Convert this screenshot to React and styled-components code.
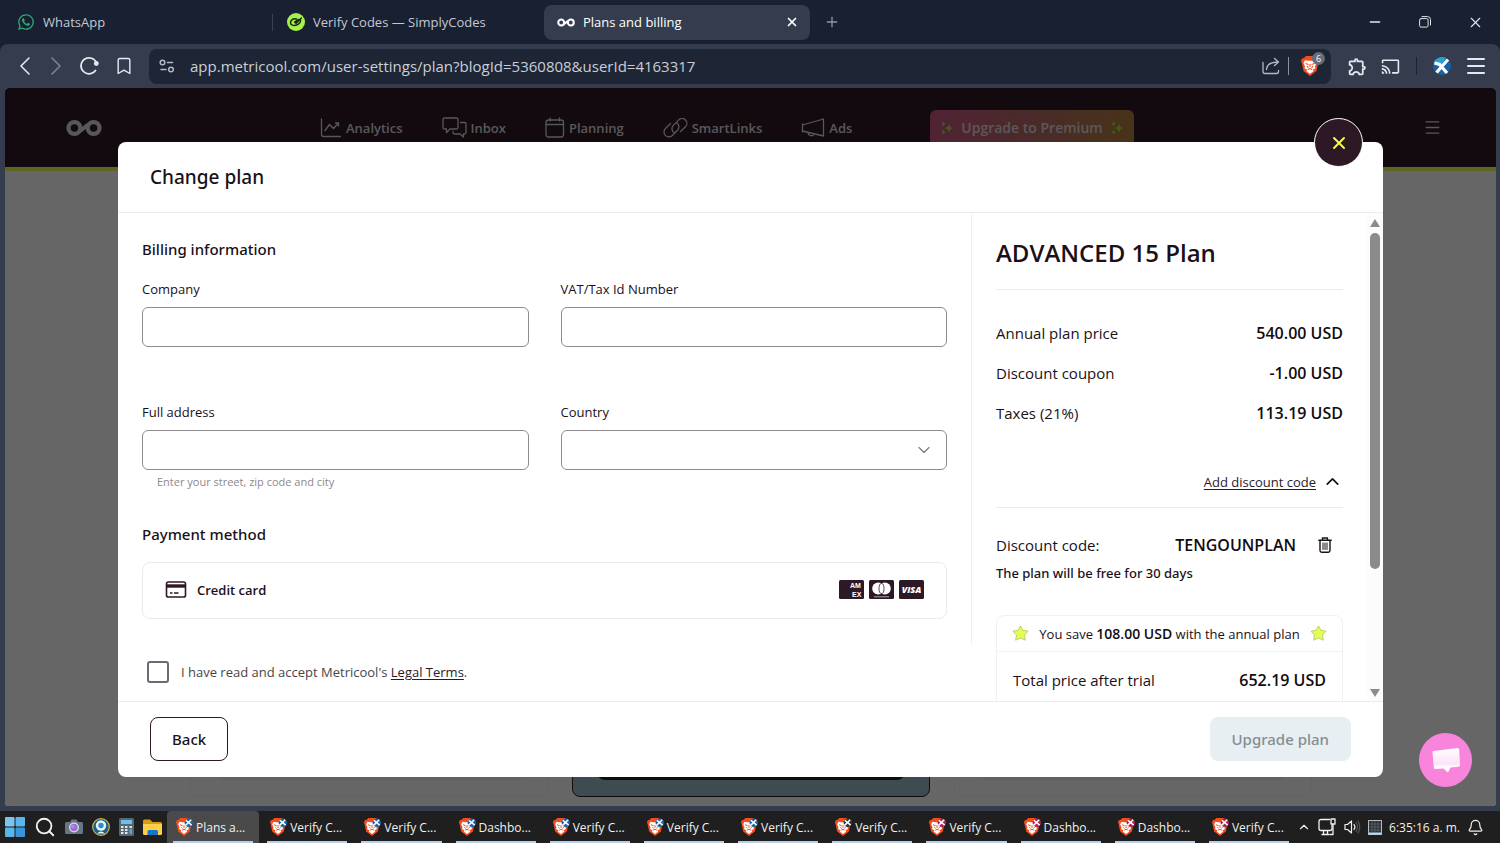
import { useState } from 'react';
import styled, { createGlobalStyle, css } from 'styled-components';
import { FaWhatsapp } from 'react-icons/fa';
import { MdCast, MdOutlineExtension } from 'react-icons/md';
import {
    Bell, Bookmark, ChevronDown, ChevronUp, Menu, Minus, Plus, Search, X,
} from 'lucide-react';

const GlobalStyle = createGlobalStyle`
    * {
        box-sizing: border-box;
    }

    body {
        margin: 0;
        background: #1f1f1f;
        font-family: "Open Sans", "Noto Sans", sans-serif;
    }

    button, input, select {
        font: inherit;
    }

    button {
        padding: 0;
        border: 0;
        background: none;
        color: inherit;
        cursor: pointer;
    }

    svg {
        display: block;
        flex: none;
    }
`;

const medium = css`
    font-family: "Noto Sans", "Open Sans", sans-serif;
    font-weight: 500;
`;

const Desktop = styled.div`
    display: flex;
    flex-direction: column;
    min-height: 100vh;
    overflow: hidden;
`;

/* ---------- browser ---------- */

const Browser = styled.div`
    flex: 1;
    display: flex;
    flex-direction: column;
    background: #182031;
`;

const TabStrip = styled.div`
    display: flex;
    align-items: center;
    height: 44px;
    padding-left: 4px;
    gap: 4px;
    font-size: 13px;
    color: #c3c9d4;
`;

const Tab = styled.div`
    position: relative;
    display: flex;
    align-items: center;
    gap: 8px;
    flex: 0 1 266px;
    height: 35px;
    padding: 0 11px 0 13px;
    border-radius: 8px;
    white-space: nowrap;

    ${({ $active }) => $active && css`
        background: #343c4e;
        color: #fff;
    `}

    ${({ $divider }) => $divider && css`
        &::after {
            content: "";
            position: absolute;
            right: -3px;
            top: 9px;
            width: 1px;
            height: 17px;
            background: #3a4252;
        }
    `}
`;

const TabTitle = styled.span`
    flex: 1;
`;

const NewTab = styled.button`
    padding: 0 10px;
    color: #8d939f;
`;

const WindowControls = styled.div`
    display: flex;
    align-items: center;
    gap: 36px;
    margin-left: auto;
    padding-right: 16px;
    color: #e3e6ec;
`;

const Toolbar = styled.div`
    display: flex;
    align-items: center;
    height: 44px;
    padding: 0 12px 0 17px;
    background: #343c4e;
    border-radius: 8px 8px 0 0;
    color: #e6e9ef;
`;

const NavButtons = styled.div`
    display: flex;
    align-items: center;
    gap: 15px;
    margin-right: 15px;
`;

const NavButton = styled.button`
    color: ${({ disabled }) => (disabled ? '#7c8493' : '#e6e9ef')};
`;

const AddressBar = styled.div`
    flex: 1;
    display: flex;
    align-items: center;
    height: 35px;
    padding: 0 11px 0 10px;
    background: #1e2635;
    border-radius: 8px;
    color: #b3b8c2;
`;

const Address = styled.input`
    flex: 1;
    margin-left: 15px;
    padding: 0;
    border: 0;
    outline: 0;
    background: none;
    color: #c9ced8;
    font-size: 15px;
`;

const Divider = styled.span`
    width: 1px;
    height: 18px;
    margin: 0 11px 0 8px;
    background: #8a909c;
`;

const ToolbarDivider = styled(Divider)`
    margin: 0 0 0 16px;
    background: #1c2433;
`;

const Shield = styled.span`
    position: relative;
`;

const ShieldCount = styled.span`
    position: absolute;
    top: -4px;
    left: 12px;
    width: 13px;
    height: 13px;
    border-radius: 50%;
    background: #666c79;
    color: #fff;
    font-size: 9px;
    line-height: 13px;
    text-align: center;
`;

const Extensions = styled.div`
    display: flex;
    align-items: center;
    gap: 13px;
    margin-left: 16px;
`;

/* ---------- page behind the dialog ---------- */

const Viewport = styled.div`
    flex: 1;
    display: flex;
    padding: 0 4px 5px 5px;
    background: #343c4e;
`;

const Page = styled.div`
    position: relative;
    flex: 1;
    display: flex;
    flex-direction: column;
    overflow: hidden;
    border-radius: 4px;
    background: #fff;
`;

const SiteHeader = styled.header`
    display: flex;
    align-items: center;
    height: 83px;
    padding: 0 54px 0 61px;
    background: #2d1926;
    border-bottom: 4px solid #ecff4f;
    color: #dedbdd;
`;

const SiteNav = styled.nav`
    display: flex;
    align-items: center;
    gap: 39px;
    margin: 0 auto 0 218px;
`;

const NavLink = styled.a`
    display: flex;
    align-items: center;
    gap: 4px;
    color: inherit;
    font-size: 13px;
    font-weight: 600;
    text-decoration: none;
`;

const Premium = styled.button`
    display: flex;
    align-items: center;
    gap: 7px;
    height: 36px;
    margin-left: 39px;
    padding: 0 10px;
    border-radius: 6px;
    background: linear-gradient(90deg, #c85781, #b86b68 50%, #b48040);
    color: #e5d9de;
    font-size: 14px;
    font-weight: 600;
`;

const PlanCards = styled.div`
    flex: 1;
    display: grid;
    grid-template-columns: 358px 358px 358px;
    justify-content: center;
    gap: 24px;
    padding-bottom: 9px;
`;

const PlanCard = styled.div`
    display: flex;
    align-items: flex-end;
    padding: 0 24px 16px;
    border: 1px solid ${({ $current }) => ($current ? '#2d1926' : '#f5f5f5')};
    border-radius: 8px;
    background: ${({ $current }) => ($current ? '#98bdcb' : '#fff')};
`;

const PlanAction = styled.span`
    flex: 1;
    height: 40px;
    border-radius: 8px;
    background: ${({ $current }) => ($current ? '#2d1926' : '#f3f3f3')};
`;

const ChatButton = styled.button`
    position: absolute;
    right: 24px;
    bottom: 19px;
    display: grid;
    place-items: center;
    width: 53px;
    height: 54px;
    border-radius: 50%;
    background: #f884dc;
`;

/* ---------- dialog ---------- */

const Overlay = styled.div`
    position: absolute;
    inset: 0;
    display: flex;
    padding: 54px 113px 29px;
    background: rgba(0, 0, 0, 0.6);
`;

const Dialog = styled.div`
    position: relative;
    flex: 1;
    display: flex;
    flex-direction: column;
    min-width: 0;
    border-radius: 8px;
    background: #fff;
    color: #1a1118;
`;

const CloseButton = styled.button`
    position: absolute;
    top: -24px;
    right: 20px;
    display: grid;
    place-items: center;
    width: 49px;
    height: 49px;
    border: 1px solid #fff;
    border-radius: 50%;
    background: #2d1926;
    color: #ecff4f;
`;

const DialogHeader = styled.div`
    display: flex;
    align-items: center;
    height: 71px;
    padding: 0 32px;
    border-bottom: 1px solid #e9edf0;
`;

const DialogTitle = styled.h2`
    ${medium}
    margin: 0;
    font-size: 19px;
`;

const DialogBody = styled.div`
    flex: 1 1 0;
    display: grid;
    grid-template-columns: minmax(0, 1fr) 411px;
    min-height: 0;
    overflow: hidden;
`;

const DialogFooter = styled.div`
    display: flex;
    align-items: center;
    justify-content: space-between;
    height: 76px;
    padding: 0 32px 1px;
    border-top: 1px solid #e9edf0;
`;

const FooterButton = styled.button`
    ${medium}
    height: 44px;
    padding: 0 21px;
    border: 1px solid #2d1926;
    border-radius: 8px;
    font-size: 15px;

    &:disabled {
        border-color: #e7eff2;
        background: #e7eff2;
        color: #858d91;
    }
`;

const BillingForm = styled.form`
    padding: 24px 24px 25px;
    border-right: 1px solid #edf0f2;
`;

const SectionTitle = styled.h3`
    ${medium}
    margin: 0 0 16px;
    font-size: 15px;
    line-height: 24px;
`;

const Fields = styled.div`
    display: grid;
    grid-template-columns: 1fr 1fr;
    gap: 29px 32px;
    margin-bottom: 28px;
`;

const Field = styled.div`
    display: flex;
    flex-direction: column;
    min-height: 94px;
    font-size: 13px;
    line-height: 24px;
`;

const Label = styled.label`
    margin-bottom: 6px;
`;

const control = css`
    width: 100%;
    height: 40px;
    padding: 0 12px;
    border: 1px solid #8f8b8e;
    border-radius: 6px;
    background: #fff;
    color: inherit;
`;

const Input = styled.input`
    ${control}
`;

const SelectWrap = styled.div`
    position: relative;

    svg {
        position: absolute;
        right: 13px;
        top: 10px;
        color: #77727a;
        pointer-events: none;
    }
`;

const Select = styled.select`
    ${control}
    appearance: none;
`;

const Hint = styled.small`
    padding-left: 15px;
    color: #8d898c;
    font-size: 11px;
`;

const PaymentOption = styled.div`
    display: flex;
    align-items: center;
    gap: 10px;
    height: 57px;
    padding: 0 22px 2px 22px;
    border: 1px solid #e6ebef;
    border-radius: 8px;
    font-size: 13px;
    font-weight: 600;
`;

const CardBrands = styled.div`
    display: flex;
    gap: 5px;
    margin-left: auto;
`;

const Terms = styled.div`
    display: flex;
    align-items: center;
    gap: 12px;
    height: 56px;
    padding-left: 29px;
    color: #4a444a;
    font-size: 13px;
`;

const Checkbox = styled.input`
    appearance: none;
    width: 22px;
    height: 22px;
    margin: 0;
    border: 2px solid #6a6b73;
    border-radius: 3px;
    background: #fff;

    &:checked {
        background: #2d1926;
    }
`;

const TextLink = styled.a`
    color: #2d1926;
    text-underline-offset: 2px;
`;

const SummaryPane = styled.aside`
    display: flex;
    min-height: 0;
    overflow: hidden;
`;

const Summary = styled.div`
    flex: 1;
    padding: 24px;
`;

const PlanName = styled.h2`
    margin: 0 0 23px;
    padding-bottom: 20px;
    border-bottom: 1px solid #e9edf0;
    font-size: 24px;
    font-weight: 600;
    line-height: 32px;
`;

const Row = styled.div`
    display: flex;
    align-items: center;
    justify-content: space-between;
    height: 40px;
    font-size: 15px;
`;

const Amount = styled.strong`
    color: #120b10;
    font-size: ${({ $small }) => ($small ? '14px' : '16px')};
    font-weight: 600;
`;

const DiscountToggle = styled.div`
    display: flex;
    align-items: center;
    justify-content: flex-end;
    gap: 6px;
    height: 52px;
    margin: 23px 0 17px;
    border-bottom: 1px solid #e3edf2;
    font-size: 13px;
`;

const Code = styled(Amount)`
    margin-left: auto;
    margin-right: 22px;
`;

const TrashButton = styled.button`
    margin-right: 11px;
`;

const FreeNote = styled.p`
    ${medium}
    margin: 0 0 34px;
    font-size: 13px;
    line-height: 16px;
`;

const TotalBox = styled.div`
    border: 1px solid #edf2f4;
    border-radius: 8px;
`;

const Saving = styled.div`
    display: flex;
    align-items: center;
    justify-content: space-between;
    height: 36px;
    padding: 0 15px;
    border-bottom: 1px solid #edf2f4;
    font-size: 13px;
`;

const Total = styled(Row)`
    height: 56px;
    padding: 0 16px;
`;

const Scrollbar = styled.div`
    display: flex;
    flex-direction: column;
    align-items: center;
    flex: 0 0 16px;
    padding: 6px 0 4px;
    background: #fcfcfc;
`;

const ScrollThumb = styled.div`
    flex: 0 1 336px;
    width: 10px;
    margin: 6px 0 auto;
    border-radius: 5px;
    background: #8b8b8b;
`;

const ScrollArrow = styled.div`
    border: solid transparent;
    border-width: 0 5px 8px;
    border-bottom-color: #8b8b8b;
    ${({ $down }) => $down && 'transform: rotate(180deg);'}
`;

/* ---------- taskbar ---------- */

const Taskbar = styled.footer`
    display: flex;
    align-items: center;
    height: 32px;
    padding: 0 16px 0 5px;
    background: #1f1f1f;
    color: #f1f1f1;
    font-size: 12px;
`;

const Pinned = styled.div`
    display: flex;
    align-items: center;
    gap: 9px;
    margin-right: 5px;
`;

const Tasks = styled.div`
    flex: 0 1 1128px;
    display: flex;
    gap: 2px;
    min-width: 0;
`;

const Task = styled.button`
    position: relative;
    flex: 1;
    display: flex;
    align-items: center;
    gap: 3px;
    height: 32px;
    padding-left: 8px;
    border-radius: 4px 4px 0 0;
    background: ${({ $active }) => ($active ? '#4a4a4a' : 'none')};
    white-space: nowrap;

    &::after {
        content: "";
        position: absolute;
        left: 6px;
        right: 6px;
        bottom: 0;
        height: 2px;
        background: #b8cfe6;
    }
`;

const Tray = styled.div`
    display: flex;
    align-items: center;
    gap: 7px;
    margin-left: auto;
    white-space: nowrap;
`;

/* ---------- drawings ---------- */

const Infinity = ({ width = 36, height = 18 }) => (
    <svg width={width} height={height} viewBox="0 0 36 18" fill="none" stroke="currentColor">
        <circle cx="8.4" cy="9" r="5.9" strokeWidth="4.2" />
        <circle cx="27.6" cy="9" r="5.9" strokeWidth="4.2" />
        <path d="M13 12.500 C16 12 19 6.500 23 5.500" strokeWidth="4" />
    </svg>
);

const BraveLion = ({ size = 20, badge }) => (
    <svg width={size} height={size} viewBox="0 0 20 20">
        <path d="M6 0h8l2 2 2 .5 1 2.500-.8 2L16.500 15 10 20l-6.500-5L1.800 7 1 5l1-2.500L4 2z" fill="#f24d1d" />
        <path
            d="M5 4.200 8 4.800h4l3-.6L16.500 7 15 10.200l.5 2-2.800 1.600 1 1.200-3.700 2.800L6.300 15l1-1.200-2.800-1.600.5-2L3.500 7z"
            fill="#fff"
        />
        <path
            d="m5.500 7.500 3 1M14.500 7.500l-3 1M10 8v3M7 10.300l1.500 1.200M13 10.300l-1.500 1.200M8 13.500l2-1 2 1"
            stroke="#f24d1d"
            strokeWidth="1.100"
            fill="none"
        />
        {badge && (
            <>
                <circle cx="15.300" cy="5.200" r="4.700" fill={badge} />
                <path d="m12 2.500 6.500 5.500M18 2l-6.500 6.500" stroke="#fff" strokeWidth="1.700" />
            </>
        )}
    </svg>
);

const line = { fill: 'none', stroke: 'currentColor', strokeLinecap: 'round', strokeLinejoin: 'round' };

const ChartIcon = () => (
    <svg width="22" height="20" viewBox="0 0 22 20" {...line} strokeWidth="1.300">
        <path d="M1.500 1v15.500q0 2 2 2H20.500M5 12.500l4.500-6 4 4 5-5.500M15.500 5h3v3" />
    </svg>
);

const InboxIcon = () => (
    <svg width="25" height="21" viewBox="0 0 25 21" {...line} strokeWidth="1.300">
        <path d="M2.500 1h12q1.500 0 1.500 1.500v8q0 1.500-1.500 1.500H8l-3.500 3.500V12h-2Q1 12 1 10.500v-8Q1 1 2.500 1z" />
        <path d="M18.500 5.500h4Q24 5.500 24 7v8.500q0 1.500-1.500 1.500h-1v3L18 17h-5.500q-1.500 0-1.500-1.500V14.500" />
    </svg>
);

const CalendarIcon = () => (
    <svg width="20" height="21" viewBox="0 0 20 21" {...line} strokeWidth="1.300">
        <rect x="1" y="3" width="17.500" height="17" rx="2.500" />
        <path d="M1 7.500h17.500M5 .8V4M14.500 .8V4" />
    </svg>
);

const LinkIcon = () => (
    <svg width="25" height="20" viewBox="0 0 25 20" {...line} strokeWidth="1.300">
        <path d="m7.500 5.500-5 5a4.800 4.800 0 0 0 6.800 7l5.500-5.500a4.800 4.800 0 0 0-1.300-7.300" />
        <path d="m17.500 13.500 5-4.800a4.700 4.700 0 0 0-6.700-6.800l-5.500 5.500a4.800 4.800 0 0 0 1.300 7.600" />
    </svg>
);

const AdsIcon = () => (
    <svg width="24" height="20" viewBox="0 0 24 20" {...line} strokeWidth="1.300">
        <path d="M22.500 1v17L1.500 13V7zM1.500 6v8M7 14.500a3.500 3.500 0 0 0 6.500 1.500" />
    </svg>
);

const Sparkles = () => (
    <svg width="14" height="14" viewBox="0 0 14 14" fill="#a5e03c">
        <path d="m9 3 1.500 3L13.500 7l-3 1.300L9 11.500 7.500 8.300 4.500 7l3-1z" />
        <path d="m3.500 0 .8 2 2 .8-2 .8-.8 2-.8-2-2-.8 2-.8zM3.500 8.500l.8 2 2 .8-2 .8-.8 1.900-.8-1.900-2-.8 2-.8z" />
    </svg>
);

const Star = () => (
    <svg width="17" height="17" viewBox="0 0 17 17">
        <path
            d="m8.500 1 2.400 4.300 5.100.9-3.500 3.800.8 5.200-4.800-2.200L3.700 15.200l.8-5.200L1 6.200l5.100-.9z"
            fill="#e4ff4f"
            stroke="#b9d070"
            strokeLinejoin="round"
        />
    </svg>
);

const CreditCardIcon = () => (
    <svg width="22" height="17" viewBox="0 0 22 17" fill="none" stroke="#2d1926" strokeWidth="1.600">
        <rect x="1.500" y="1" width="19" height="15" rx="1.800" />
        <path d="M1.500 5h19" strokeWidth="3.400" />
        <path d="M5 12h2.500M9 12h4.500" />
    </svg>
);

const TrashIcon = () => (
    <svg width="14" height="16" viewBox="0 0 14 16" {...line} strokeWidth="1.400">
        <path d="M.8 3.300h12.400M4.500 3V1h5v2M2 3.500V13.500q0 1.700 1.700 1.700h6.600q1.700 0 1.700-1.700V3.500" />
        <path d="M5 6v6.500M7 6v6.500M9 6v6.500" strokeWidth="1" />
    </svg>
);

const Brand = ({ name }) => (
    <svg width="25" height="19" viewBox="0 0 25 19" role="img" aria-label={name}>
        <rect width="25" height="19" rx="1.500" fill="#2d1926" />
        {name === 'Visa' && (
            <text x="12.500" y="13" fill="#fff" fontSize="9" fontWeight="800" fontStyle="italic" textAnchor="middle">VISA</text>
        )}
        {name === 'Mastercard' && (
            <>
                <circle cx="9.200" cy="8.500" r="6" fill="#fff" />
                <circle cx="15.800" cy="8.500" r="6" fill="#fff" />
                <ellipse cx="12.500" cy="8.500" rx="2.500" ry="5" fill="#fff" stroke="#2d1926" strokeWidth=".8" />
                <path d="M5 16.800h15" stroke="#aaa2a8" />
            </>
        )}
        {name === 'Amex' && (
            <g fill="#fff" fontFamily="Liberation Sans, sans-serif" fontSize="7" fontWeight="700">
                <text x="11" y="8">AM</text>
                <text x="13" y="17">EX</text>
            </g>
        )}
    </svg>
);

const SimplyIcon = () => (
    <svg width="18" height="18" viewBox="0 0 18 18">
        <circle cx="9" cy="9" r="9" fill="#a6f24c" />
        <g fill="none" stroke="#16240f" strokeWidth="1.500" strokeLinecap="round">
            <path d="M9.500 6C6 5 3.500 7.500 3.500 9.800s3 3.200 6 2.200c2.500-1 4-2.500 4-4.500" />
            <path d="m7.500 9 1.500 1.300L14.500 5M8.500 8.500l3.500-2" />
        </g>
    </svg>
);

const SiteInfoIcon = () => (
    <svg width="16" height="14" viewBox="0 0 16 14" {...line} strokeWidth="1.500">
        <circle cx="3.500" cy="3.500" r="2.300" />
        <circle cx="12" cy="10.500" r="2.300" />
        <path d="M8.500 3.500h5M2 10.500h5" />
    </svg>
);

const ReloadIcon = () => (
    <svg width="20" height="20" viewBox="0 0 20 20" {...line} strokeWidth="1.700">
        <path d="M16.500 14.500A8 8 0 1 1 17.500 7" />
        <circle cx="17.300" cy="7.500" r="1.600" fill="currentColor" />
    </svg>
);

const ShareIcon = () => (
    <svg width="18" height="18" viewBox="0 0 18 18" {...line} strokeWidth="1.300">
        <path d="M1 5.500v9q0 2 2 2h11.500q2 0 2-2V13.500M4.500 12.500C5 7.500 9 5 16 5M12.500 1.500 16.500 5l-4 3.500" />
    </svg>
);

const Arrow = ({ right }) => (
    <svg width="16" height="18" viewBox="0 0 16 18" {...line} strokeWidth="1.600">
        <path d={right ? 'm4 1 8 8-8 8' : 'M12 1 4 9l8 8'} />
    </svg>
);

const RestoreIcon = () => (
    <svg width="12" height="12" viewBox="0 0 12 12" {...line}>
        <rect x=".6" y="2.600" width="8.500" height="8.500" rx="1.500" />
        <path d="M3 .6h5.500q3 0 3 3V9" />
    </svg>
);

const ProfileIcon = () => (
    <svg width="18" height="18" viewBox="0 0 18 18">
        <circle cx="9" cy="9" r="9" fill="#1760a8" />
        <path d="M.5 6A9 9 0 0 1 13 1L8 8z" fill="#29a3d6" />
        <path d="m1.500 6 5 1.500 7.500 8.500M15 2.500 3.500 15.500" stroke="#fff" strokeWidth="3.200" fill="none" />
    </svg>
);

const ChatIcon = () => (
    <svg width="30" height="28" viewBox="0 0 30 28">
        <defs>
            <linearGradient id="chat" x2="0" y2="1">
                <stop offset="0" stopColor="#fff" />
                <stop offset=".65" stopColor="#fae3f6" />
                <stop offset=".8" stopColor="#fff" />
            </linearGradient>
        </defs>
        <path d="M2.500 5 26.500 2q1.500 0 1.700 1.500L29 19q0 1.500-1.500 1.700l-8 .8-2.500 5-4.500-4-8 .5Q3 23 2.800 21.500L1.500 6.500Q1.300 5 2.500 5z" fill="url(#chat)" />
    </svg>
);

const WindowsIcon = () => (
    <svg width="20" height="20" viewBox="0 0 20 20">
        <g fill="#58b6ec">
            <rect width="9.500" height="9.500" rx="1" fill="#7cc4ee" />
            <rect x="10.500" width="9.500" height="9.500" rx="1" />
            <rect y="10.500" width="9.500" height="9.500" rx="1" />
            <rect x="10.500" y="10.500" width="9.500" height="9.500" rx="1" fill="#3b94da" />
        </g>
    </svg>
);

const CameraApp = () => (
    <svg width="18" height="16" viewBox="0 0 18 16">
        <path d="M5 3 6.500.5h5L13 3h3.500Q18 3 18 4.500v9q0 1.500-1.500 1.500h-15Q0 15 0 13.500v-9Q0 3 1.500 3z" fill="#697582" />
        <circle cx="9" cy="8.500" r="5" fill="#d9dfec" />
        <circle cx="9" cy="8.500" r="3.700" fill="#a66ad6" />
        <circle cx="8" cy="7.500" r="1.700" fill="#7fa4f2" />
    </svg>
);

const WebcamApp = () => (
    <svg width="18" height="18" viewBox="0 0 18 18">
        <circle cx="9" cy="9" r="8.300" fill="#15608e" stroke="#d8b34f" strokeWidth="1.200" />
        <circle cx="9" cy="7.500" r="5.200" fill="#e8f4fa" />
        <circle cx="9" cy="7.500" r="2.700" fill="#2a8ec0" />
        <path d="M5 15.500q4-4 8 0z" fill="#e8f4fa" />
    </svg>
);

const CalculatorApp = () => (
    <svg width="15" height="18" viewBox="0 0 15 18">
        <rect width="15" height="18" rx="1.500" fill="#5a6673" />
        <rect x="2" y="2" width="11" height="4" fill="#63c5e8" />
        <path d="M2 9h2.500M6 9h2.500M10.500 9H13M2 12h2.500M6 12h2.500M2 15h2.500M6 15h2.500" stroke="#dfe5ea" strokeWidth="2" />
        <path d="M10.500 13.500H13" stroke="#45aee0" strokeWidth="5" />
    </svg>
);

const FolderApp = () => (
    <svg width="19" height="17" viewBox="0 0 19 17">
        <path d="M0 2Q0 .5 1.500.5H7L9.500 3h8Q19 3 19 4.500V8H0z" fill="#d99a1c" />
        <path d="M0 6q0-1 1-1h17q1 0 1 1v8.500q0 1.500-1.500 1.500h-16Q0 16 0 14.500z" fill="#fcd04c" />
        <path d="M4.500 16v-3.500q0-1.500 1.500-1.500h7.500q1.500 0 1.500 1.500V16z" fill="#1677c9" />
    </svg>
);

const MonitorIcon = () => (
    <svg width="19" height="18" viewBox="0 0 19 18" {...line} strokeWidth="1.300">
        <path d="M11.500 1.500H3q-2 0-2 2v7q0 2 2 2h9q2 0 2-2V7M5.500 12.500V16M9.500 12.500V16M4 16.500h7" />
        <path d="M13 1h4v5h-4zM15 6v10.500h-3" />
    </svg>
);

const SpeakerIcon = () => (
    <svg width="17" height="14" viewBox="0 0 17 14" {...line} strokeWidth="1.200">
        <path d="M1 4.500h2.500L7.500 1v12L3.500 9.500H1zM10 4.500q1.800 2.500 0 5" />
        <path d="M12 2.500q3 4.500 0 9M14 1q3.500 6 0 12" stroke="#555" />
    </svg>
);

const MemoryIcon = () => (
    <svg width="14" height="15" viewBox="0 0 14 15">
        <rect x=".5" y=".5" width="13" height="14" fill="#2b3036" stroke="#b5bbc2" />
        <path d="M4 1v11M7 1v11M10 1v11M1 4h12M1 7h12M1 10h12" stroke="#69727c" strokeWidth=".6" />
        <path d="M1 13.500h12" stroke="#b7dcf5" strokeWidth="2" />
    </svg>
);

/* ---------- data ---------- */

const navItems = [
    { label: 'Analytics', icon: <ChartIcon /> },
    { label: 'Inbox', icon: <InboxIcon /> },
    { label: 'Planning', icon: <CalendarIcon /> },
    { label: 'SmartLinks', icon: <LinkIcon /> },
    { label: 'Ads', icon: <AdsIcon /> },
];

const prices = [
    ['Annual plan price', '540.00 USD'],
    ['Discount coupon', '-1.00 USD'],
    ['Taxes (21%)', '113.19 USD'],
];

const BLUE = '#1c65a8';
const GREY = '#34383d';
const PINK = '#a82754';

const tasks = [
    ['Plans a...', BLUE],
    ['Verify C...', BLUE],
    ['Verify C...', BLUE],
    ['Dashbo...', BLUE],
    ['Verify C...', BLUE],
    ['Verify C...', BLUE],
    ['Verify C...', BLUE],
    ['Verify C...', GREY],
    ['Verify C...', PINK],
    ['Dashbo...', PINK],
    ['Dashbo...', PINK],
    ['Verify C...', PINK],
];

function BrowserChrome() {
    return (
        <>
            <TabStrip>
                <Tab $divider>
                    <FaWhatsapp size={18} color="#2faa72" />
                    <TabTitle>WhatsApp</TabTitle>
                </Tab>
                <Tab>
                    <SimplyIcon />
                    <TabTitle>Verify Codes — SimplyCodes</TabTitle>
                </Tab>
                <Tab $active>
                    <Infinity width={18} height={9} />
                    <TabTitle>Plans and billing</TabTitle>
                    <button aria-label="Close tab"><X size={14} strokeWidth={3} /></button>
                </Tab>
                <NewTab aria-label="New tab"><Plus size={16} strokeWidth={2} /></NewTab>
                <WindowControls>
                    <button aria-label="Minimize"><Minus size={16} strokeWidth={2} /></button>
                    <button aria-label="Restore"><RestoreIcon /></button>
                    <button aria-label="Close"><X size={17} strokeWidth={1.5} /></button>
                </WindowControls>
            </TabStrip>
            <Toolbar>
                <NavButtons>
                    <NavButton aria-label="Back"><Arrow /></NavButton>
                    <NavButton aria-label="Forward" disabled><Arrow right /></NavButton>
                    <NavButton aria-label="Reload"><ReloadIcon /></NavButton>
                    <NavButton aria-label="Bookmark"><Bookmark size={20} strokeWidth={1.7} /></NavButton>
                </NavButtons>
                <AddressBar>
                    <SiteInfoIcon />
                    <Address
                        aria-label="Address"
                        defaultValue="app.metricool.com/user-settings/plan?blogId=5360808&userId=4163317"
                    />
                    <ShareIcon />
                    <Divider />
                    <Shield>
                        <BraveLion size={20} />
                        <ShieldCount>6</ShieldCount>
                    </Shield>
                </AddressBar>
                <Extensions>
                    <MdOutlineExtension size={21} />
                    <MdCast size={19} />
                </Extensions>
                <ToolbarDivider />
                <Extensions>
                    <ProfileIcon />
                    <Menu size={24} strokeWidth={2} />
                </Extensions>
            </Toolbar>
        </>
    );
}

function ChangePlan({ onClose }) {
    const [accepted, setAccepted] = useState(false);

    return (
        <Dialog role="dialog" aria-label="Change plan">
            <CloseButton aria-label="Close" onClick={onClose}>
                <X size={20} strokeWidth={2.4} />
            </CloseButton>
            <DialogHeader>
                <DialogTitle>Change plan</DialogTitle>
            </DialogHeader>
            <DialogBody>
                <div>
                    <BillingForm>
                        <SectionTitle>Billing information</SectionTitle>
                        <Fields>
                            <Field>
                                <Label htmlFor="company">Company</Label>
                                <Input id="company" />
                            </Field>
                            <Field>
                                <Label htmlFor="vat">VAT/Tax Id Number</Label>
                                <Input id="vat" />
                            </Field>
                            <Field>
                                <Label htmlFor="address">Full address</Label>
                                <Input id="address" />
                                <Hint>Enter your street, zip code and city</Hint>
                            </Field>
                            <Field>
                                <Label htmlFor="country">Country</Label>
                                <SelectWrap>
                                    <Select id="country" defaultValue="">
                                        <option value="" />
                                    </Select>
                                    <ChevronDown size={20} strokeWidth={1.3} />
                                </SelectWrap>
                            </Field>
                        </Fields>
                        <SectionTitle>Payment method</SectionTitle>
                        <PaymentOption>
                            <CreditCardIcon />
                            Credit card
                            <CardBrands>
                                <Brand name="Amex" />
                                <Brand name="Mastercard" />
                                <Brand name="Visa" />
                            </CardBrands>
                        </PaymentOption>
                    </BillingForm>
                    <Terms>
                        <Checkbox
                            id="terms"
                            type="checkbox"
                            checked={accepted}
                            onChange={(e) => setAccepted(e.target.checked)}
                        />
                        <label htmlFor="terms">
                            I have read and accept Metricool's <TextLink href="#">Legal Terms</TextLink>.
                        </label>
                    </Terms>
                </div>
                <SummaryPane>
                    <Summary>
                        <PlanName>ADVANCED 15 Plan</PlanName>
                        {prices.map(([label, value]) => (
                            <Row key={label}>
                                <span>{label}</span>
                                <Amount>{value}</Amount>
                            </Row>
                        ))}
                        <DiscountToggle>
                            <TextLink href="#">Add discount code</TextLink>
                            <ChevronUp size={21} strokeWidth={2} />
                        </DiscountToggle>
                        <Row>
                            <span>Discount code:</span>
                            <Code>TENGOUNPLAN</Code>
                            <TrashButton aria-label="Remove code"><TrashIcon /></TrashButton>
                        </Row>
                        <FreeNote>The plan will be free for 30 days</FreeNote>
                        <TotalBox>
                            <Saving>
                                <Star />
                                <span>You save <Amount $small>108.00 USD</Amount> with the annual plan</span>
                                <Star />
                            </Saving>
                            <Total>
                                <span>Total price after trial</span>
                                <Amount>652.19 USD</Amount>
                            </Total>
                        </TotalBox>
                    </Summary>
                    <Scrollbar>
                        <ScrollArrow />
                        <ScrollThumb />
                        <ScrollArrow $down />
                    </Scrollbar>
                </SummaryPane>
            </DialogBody>
            <DialogFooter>
                <FooterButton onClick={onClose}>Back</FooterButton>
                <FooterButton disabled={!accepted}>Upgrade plan</FooterButton>
            </DialogFooter>
        </Dialog>
    );
}

function App() {
    const [open, setOpen] = useState(true);

    return (
        <Desktop>
            <GlobalStyle />
            <Browser>
                <BrowserChrome />
                <Viewport>
                    <Page>
                        <SiteHeader>
                            <Infinity />
                            <SiteNav>
                                {navItems.map(({ label, icon }) => (
                                    <NavLink href="#" key={label}>{icon}{label}</NavLink>
                                ))}
                                <Premium onClick={() => setOpen(true)}>
                                    <Sparkles />
                                    Upgrade to Premium
                                    <Sparkles />
                                </Premium>
                            </SiteNav>
                            <Menu size={19} strokeWidth={1.6} />
                        </SiteHeader>
                        <PlanCards>
                            <PlanCard><PlanAction /></PlanCard>
                            <PlanCard $current><PlanAction $current /></PlanCard>
                            <PlanCard><PlanAction /></PlanCard>
                        </PlanCards>
                        {open && (
                            <Overlay>
                                <ChangePlan onClose={() => setOpen(false)} />
                            </Overlay>
                        )}
                        <ChatButton aria-label="Chat"><ChatIcon /></ChatButton>
                    </Page>
                </Viewport>
            </Browser>
            <Taskbar>
                <Pinned>
                    <WindowsIcon />
                    <Search size={22} strokeWidth={2} />
                    <CameraApp />
                    <WebcamApp />
                    <CalculatorApp />
                    <FolderApp />
                </Pinned>
                <Tasks>
                    {tasks.map(([title, badge], i) => (
                        <Task key={i} $active={i === 0}>
                            <BraveLion size={18} badge={badge} />
                            {title}
                        </Task>
                    ))}
                </Tasks>
                <Tray>
                    <ChevronUp size={14} />
                    <MonitorIcon />
                    <SpeakerIcon />
                    <MemoryIcon />
                    <span>6:35:16 a. m.</span>
                    <Bell size={17} strokeWidth={1.7} />
                </Tray>
            </Taskbar>
        </Desktop>
    );
}

export default App;
